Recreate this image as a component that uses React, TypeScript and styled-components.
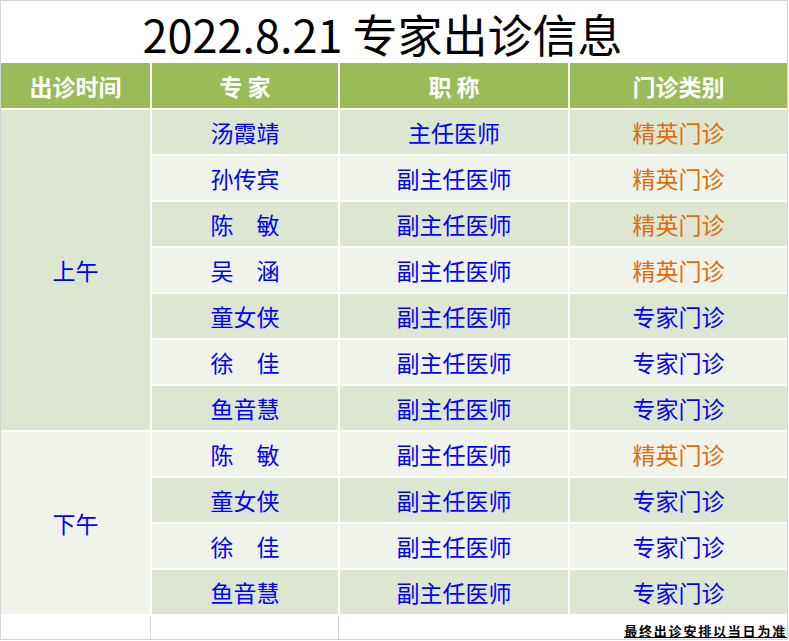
import { FC } from "react";
import styled, { createGlobalStyle } from "styled-components";

const GlobalStyle = createGlobalStyle`
  html, body {
    margin: 0;
    padding: 0;
    background: #fff;
  }
  body {
    font-family: "Noto Sans CJK SC", "Noto Sans", sans-serif;
  }
`;

const BLUE = "#0000ff";
const ORANGE = "#e26b0a";
const BAND_DARK = "#dce6d1";
const BAND_LIGHT = "#eff3ea";

interface IRow {
  name: string;
  title: string;
  kind: string;
}

const sessions: { label: string; rows: IRow[] }[] = [
  {
    label: "上午",
    rows: [
      { name: "汤霞靖", title: "主任医师", kind: "精英门诊" },
      { name: "孙传宾", title: "副主任医师", kind: "精英门诊" },
      { name: "陈　敏", title: "副主任医师", kind: "精英门诊" },
      { name: "吴　涵", title: "副主任医师", kind: "精英门诊" },
      { name: "童女侠", title: "副主任医师", kind: "专家门诊" },
      { name: "徐　佳", title: "副主任医师", kind: "专家门诊" },
      { name: "鱼音慧", title: "副主任医师", kind: "专家门诊" },
    ],
  },
  {
    label: "下午",
    rows: [
      { name: "陈　敏", title: "副主任医师", kind: "精英门诊" },
      { name: "童女侠", title: "副主任医师", kind: "专家门诊" },
      { name: "徐　佳", title: "副主任医师", kind: "专家门诊" },
      { name: "鱼音慧", title: "副主任医师", kind: "专家门诊" },
    ],
  },
];

const App: FC = () => {
  let rowIndex = 0;

  return (
    <>
      <GlobalStyle />
      <Sheet>
        <Title>2022.8.21 专家出诊信息</Title>
        <Table>
          <HeadCell>出诊时间</HeadCell>
          <HeadCell>专 家</HeadCell>
          <HeadCell>职 称</HeadCell>
          <HeadCell>门诊类别</HeadCell>

          {sessions.map((session, s) => {
            const cells = session.rows.map((row) => {
              const dark = rowIndex % 2 === 0;
              rowIndex++;
              return [
                <Cell key={"n" + rowIndex} $dark={dark}>
                  {row.name}
                </Cell>,
                <Cell key={"t" + rowIndex} $dark={dark}>
                  {row.title}
                </Cell>,
                <Cell
                  key={"k" + rowIndex}
                  $dark={dark}
                  $orange={row.kind === "精英门诊"}
                >
                  {row.kind}
                </Cell>,
              ];
            });
            return [
              <SessionCell
                key={"s" + s}
                $span={session.rows.length}
                $dark={s % 2 === 0}
              >
                {session.label}
              </SessionCell>,
              ...cells.flat(),
            ];
          })}

          <Footer>
            <FooterBlank />
            <FooterBlank />
            <FooterNote>最终出诊安排以当日为准</FooterNote>
          </Footer>
        </Table>
      </Sheet>
    </>
  );
};

const Sheet = styled.div`
  width: 786px;
  height: 638px;
  border: 1px solid #d4d4d4;
  background: #fff;
  display: flex;
  flex-direction: column;
`;

const Title = styled.div`
  height: 62px;
  display: flex;
  align-items: center;
  justify-content: center;
  padding-right: 23px;
  padding-top: 2px;
  box-sizing: border-box;
  font-size: 45px;
  color: #000;
  line-height: 1;
  white-space: pre;
`;

const Table = styled.div`
  display: grid;
  grid-template-columns: 149px 186px 228px 217px;
  grid-template-rows: 45px repeat(11, 44px) 1fr;
  column-gap: 2px;
  row-gap: 2px;
  flex: 1;
`;

const HeadCell = styled.div`
  background: #9bbb59;
  color: #fff;
  font-weight: 700;
  font-size: 23px;
  display: flex;
  align-items: center;
  justify-content: center;
  white-space: pre;
`;

const Cell = styled.div<{ $dark: boolean; $orange?: boolean }>`
  background: ${(p) => (p.$dark ? BAND_DARK : BAND_LIGHT)};
  color: ${(p) => (p.$orange ? ORANGE : BLUE)};
  font-size: 23px;
  display: flex;
  align-items: center;
  justify-content: center;
  white-space: pre;
`;

const SessionCell = styled(Cell)<{ $span: number }>`
  grid-column: 1;
  grid-row: span ${(p) => p.$span};
`;

const Footer = styled.div`
  grid-column: 1 / -1;
  display: grid;
  grid-template-columns: 150px 188px 1fr;
  margin: 0 -1px 0 0;
`;

const FooterBlank = styled.div`
  border-right: 1px solid #d4d4d4;
`;

const FooterNote = styled.div`
  display: flex;
  align-items: flex-end;
  justify-content: flex-end;
  padding: 0 1px 2px 0;
  font-size: 13px;
  font-weight: 700;
  letter-spacing: 1.8px;
  color: #000;
  text-decoration: underline;
  line-height: 1;
`;

export default App;
